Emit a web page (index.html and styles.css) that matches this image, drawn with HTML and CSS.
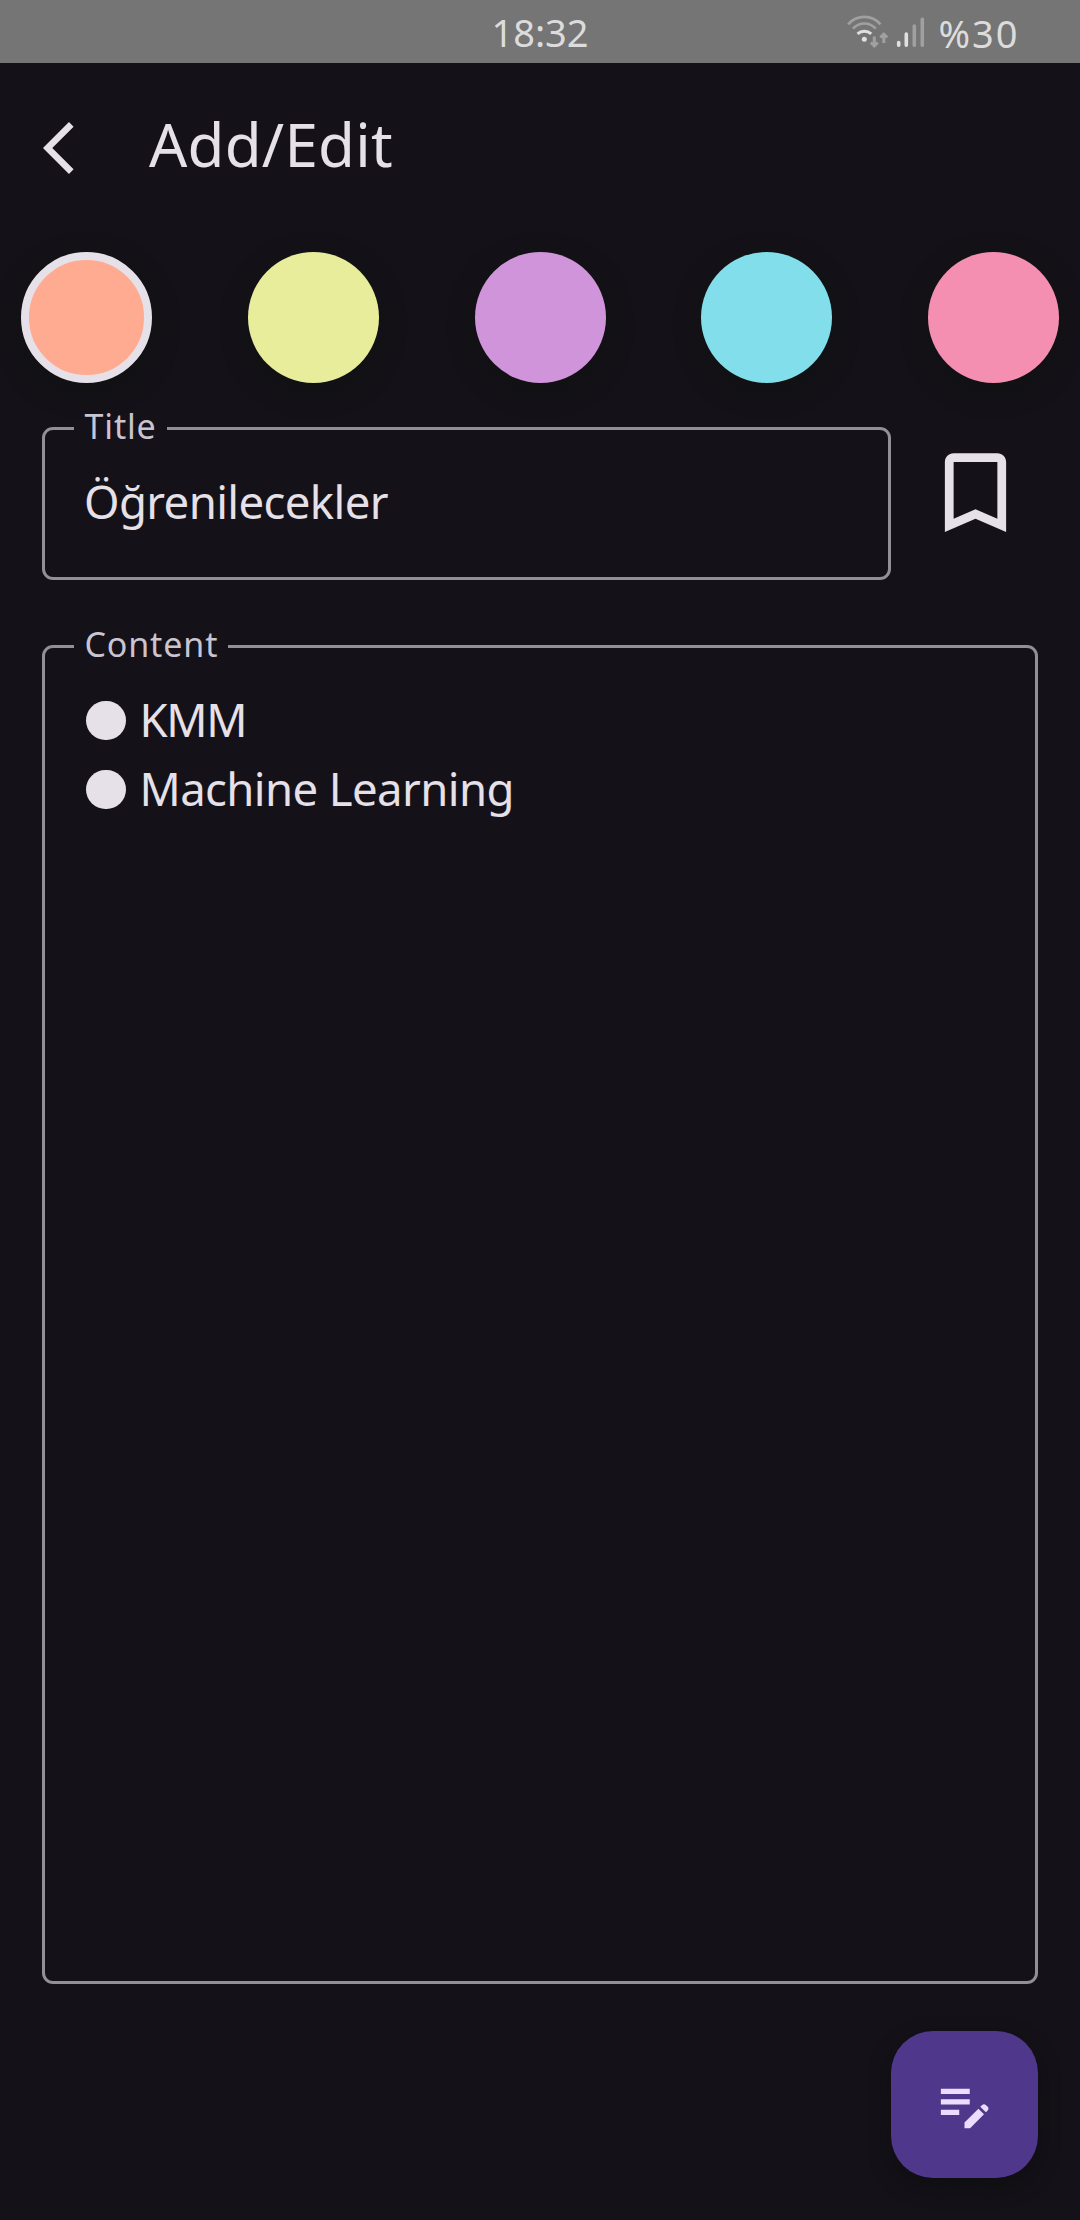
FILE: index.html
```
<!DOCTYPE html>
<html lang="tr">
<head>
  <meta charset="utf-8">
  <title>Add/Edit</title>
  <link rel="stylesheet" href="styles.css">
</head>
<body>
  <div class="status-bar">
    <span class="clock">18:32</span>
    <div class="status-right">
      <svg class="signals" viewBox="0 0 80 34" fill="none" stroke-linecap="round">
        <g stroke="#a0a0a0" stroke-width="2.7">
          <path d="M2.2 9.3A21.3 21.3 0 0 1 34.5 9.3" stroke-linecap="butt"/>
          <path d="M6.9 13.7A15.2 15.2 0 0 1 29.8 13.7" stroke-linecap="butt"/>
          <path d="M28.3 21.5V30M24.8 27.5L28.3 31L31.8 27.5M37.8 28V19.5M34.3 22.5L37.8 19L41.3 22.5" stroke-linecap="butt" stroke-width="3"/>
        </g>
        <path d="M11.5 18.8A10.4 10.4 0 0 1 25.2 18.8" stroke="#e0e0e0" stroke-width="3" stroke-linecap="butt"/>
        <circle cx="18.3" cy="24.3" r="2.5" fill="#e0e0e0"/>
        <path d="M52.7 27.5V30.2M60.3 19V30.2" stroke="#e0e0e0" stroke-width="3.6"/>
        <path d="M68.3 11V30.2M76.3 4.3V30.2" stroke="#a0a0a0" stroke-width="3.6"/>
      </svg>
      <span class="battery">%30</span>
    </div>
  </div>

  <header class="top-bar">
    <svg class="back" viewBox="0 2.1 11.67 19.8"><path d="M11.67 3.87L9.9 2.1 0 12l9.9 9.9 1.77-1.77L3.54 12z"/></svg>
    <h1 class="heading">Add/Edit</h1>
  </header>

  <div class="palette">
    <button class="swatch orange selected" aria-label="Orange"></button>
    <button class="swatch lime" aria-label="Lime"></button>
    <button class="swatch violet" aria-label="Violet"></button>
    <button class="swatch cyan" aria-label="Cyan"></button>
    <button class="swatch pink" aria-label="Pink"></button>
  </div>

  <div class="title-row">
    <fieldset class="field title-field">
      <legend>Title</legend>
      <div class="value">Öğrenilecekler</div>
    </fieldset>
    <svg class="bookmark" viewBox="0 0 24 24"><path d="M17 3H7c-1.1 0-2 .9-2 2v16l7-3 7 3V5c0-1.1-.9-2-2-2zm0 15l-5-2.18L7 18V5h10v13z"/></svg>
  </div>

  <fieldset class="field content-field">
    <legend>Content</legend>
    <ul class="notes">
      <li class="value short">KMM</li>
      <li class="value">Machine Learning</li>
    </ul>
  </fieldset>

  <button class="fab" aria-label="Save">
    <svg viewBox="0 0 24 24"><path d="M3 10h11v2H3v-2zm0-2h11V6H3v2zm0 8h7v-2H3v2zm15.01-3.13l.71-.71c.39-.39 1.02-.39 1.41 0l.71.71c.39.39.39 1.02 0 1.41l-.71.71-2.12-2.12zm-.71.71l-5.3 5.3V21h2.12l5.3-5.3-2.12-2.12z"/></svg>
  </button>
</body>
</html>
```
FILE: styles.css
```
* { box-sizing: border-box; margin: 0; padding: 0; }

body {
  display: flex;
  flex-direction: column;
  height: 2220px;
  background: #141218;
  color: #e6e0e9;
  font-family: "Noto Sans", sans-serif;
}

svg { display: block; flex: none; }
button { border: 0; }

.status-bar {
  display: grid;
  grid-template-columns: 1fr auto 1fr;
  height: 63px;
  background: #757575;
  color: #dcdcdc;
  font-size: 38px;
  line-height: 63px;
}
.clock { grid-column: 2; padding-top: 1px; }
.status-right {
  display: flex;
  justify-content: flex-end;
  gap: 12.5px;
  padding-right: 60.5px;
}
.signals { width: 80px; height: 34px; margin-top: 15px; }
.battery { padding-top: 2px; letter-spacing: 2px; }

.top-bar {
  display: flex;
  align-items: center;
  gap: 75.4px;
  height: 169px;
  padding-left: 43px;
}
.back { width: 30.6px; height: 52px; fill: #e6e0e9; }
.heading {
  padding-bottom: 8px;
  font-size: 60px;
  font-weight: 400;
  line-height: 84px;
  letter-spacing: 0.25px;
}

.palette {
  display: flex;
  justify-content: space-between;
  margin-top: 20px;
  padding: 0 21px;
}
.swatch {
  width: 131px;
  height: 131px;
  border-radius: 50%;
  box-shadow: 0 8px 24px rgba(16, 17, 18, 0.8);
}
.selected { border: 8px solid #e6e0e9; }
.orange { background: #ffab91; }
.lime { background: #e7ed9b; }
.violet { background: #cf94da; }
.cyan { background: #81deea; }
.pink { background: #f48fb1; }

.title-row {
  display: flex;
  gap: 32px;
  margin: 20px 0 0 42px;
}

.field {
  border: 3px solid #938f99;
  border-radius: 11px;
  padding: 13px 29px 0;
}
.field legend {
  padding: 0 10px 5px 10.5px;
  color: #cac4d0;
  font-size: 34px;
  line-height: 46px;
  letter-spacing: 0.85px;
}
.title-field { width: 849px; height: 177px; }
.content-field { height: 1363px; margin: 41px 42px 0; }

.value {
  padding-left: 10px;
  font-size: 45.5px;
  line-height: 69px;
  letter-spacing: -0.6px;
}
.bookmark { width: 105px; height: 105px; margin-top: 37px; fill: #e6e0e9; }

.notes { list-style: none; }
.notes .value {
  display: flex;
  align-items: center;
  gap: 14px;
  padding-left: 12px;
}
.notes .value::before {
  content: "";
  width: 39.5px;
  height: 39.5px;
  margin-top: 2px;
  border-radius: 50%;
  background: #e6e0e9;
}
.notes .short { letter-spacing: -1.4px; }

.fab {
  display: grid;
  place-items: center;
  align-self: flex-end;
  width: 147px;
  height: 147px;
  margin: 47px 42px 0 0;
  border-radius: 42px;
  background: #4f378b;
  box-shadow: 0 8px 20px rgba(10, 10, 12, 0.5);
}
.fab svg { width: 63px; height: 63px; fill: #eaddff; }
```
